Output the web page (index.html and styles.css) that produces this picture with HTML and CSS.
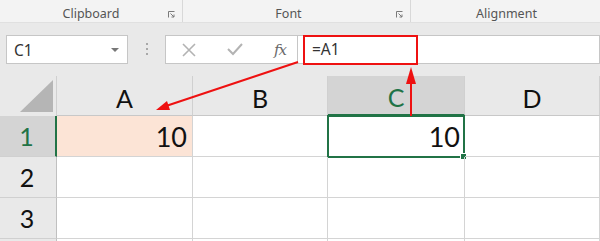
FILE: index.html
```html
<!DOCTYPE html>
<html lang="en">

<head>
    <meta charset="UTF-8">
    <title>Formula bar</title>
    <link rel="stylesheet" href="styles.css">
</head>

<body>
    <div class="sheet">
        <div class="ribbon">
            <div class="group g-clip">
                <span class="label">Clipboard</span>
                <svg class="launcher" width="7" height="7" viewBox="0 0 7 7">
                    <path d="M0.5 6.5V0.5H6.5" fill="none" stroke="#7a7a7a" />
                    <path d="M2.5 2.5L6 6M6 3.5V6H3.5" fill="none" stroke="#7a7a7a" />
                </svg>
            </div>
            <div class="group g-font">
                <span class="label">Font</span>
                <svg class="launcher" width="7" height="7" viewBox="0 0 7 7">
                    <path d="M0.5 6.5V0.5H6.5" fill="none" stroke="#7a7a7a" />
                    <path d="M2.5 2.5L6 6M6 3.5V6H3.5" fill="none" stroke="#7a7a7a" />
                </svg>
            </div>
            <div class="group g-align">
                <span class="label">Alignment</span>
            </div>
        </div>

        <div class="fbar">
            <div class="namebox">
                <span>C1</span>
                <span class="drop"></span>
            </div>
            <div class="dots"><i></i><i></i><i></i></div>
            <div class="buttons">
                <svg width="14" height="14" viewBox="0 0 14 14">
                    <path d="M1 1L13 13M13 1L1 13" stroke="#b3b3b3" stroke-width="1.6" />
                </svg>
                <svg width="16" height="13" viewBox="0 0 16 13">
                    <path d="M1 6L6 11L15 1" fill="none" stroke="#b3b3b3" stroke-width="2" />
                </svg>
                <span class="fx">fx</span>
            </div>
            <div class="input">=A1</div>
        </div>

        <div class="grid">
            <div class="corner"><span class="tri"></span></div>
            <div class="colhead">A</div>
            <div class="colhead">B</div>
            <div class="colhead active">C</div>
            <div class="colhead">D</div>

            <div class="rowhead active">1</div>
            <div class="cell ref">10</div>
            <div class="cell"></div>
            <div class="cell current">10<span class="handle"></span></div>
            <div class="cell"></div>

            <div class="rowhead">2</div>
            <div class="cell"></div>
            <div class="cell"></div>
            <div class="cell"></div>
            <div class="cell"></div>

            <div class="rowhead">3</div>
            <div class="cell"></div>
            <div class="cell"></div>
            <div class="cell"></div>
            <div class="cell"></div>

            <div class="rowhead"></div>
            <div class="cell"></div>
            <div class="cell"></div>
            <div class="cell"></div>
            <div class="cell"></div>
        </div>

        <!-- red callouts drawn over the screenshot -->
        <svg class="marks" width="600" height="241" viewBox="0 0 600 241">
            <rect x="304" y="36" width="113" height="28" fill="none" stroke="#ee1111" stroke-width="2" />
            <line x1="298" y1="62" x2="166" y2="106" stroke="#ee1111" stroke-width="2" />
            <path d="M156 110L167 101L170 110Z" fill="#ee1111" />
            <line x1="411" y1="116" x2="411" y2="80" stroke="#ee1111" stroke-width="2" />
            <path d="M411 67L406 84H416Z" fill="#ee1111" />
        </svg>
    </div>
</body>

</html>
```

FILE: styles.css
```css
body {
    margin: 0;
    background: #fff;
}

.sheet {
    position: relative;
    width: 600px;
    height: 241px;
    overflow: hidden;
    font-family: "Noto Sans", sans-serif;
}

.ribbon {
    display: flex;
    height: 23px;
    background: #f3f3f3;
    border-bottom: 1px solid #e0e0e0;
    box-sizing: border-box;
}

.group {
    position: relative;
    display: flex;
    align-items: center;
    justify-content: center;
    border-right: 1px solid #d8d8d8;
    box-sizing: border-box;
}

.g-clip {
    width: 183px;
}

.g-font {
    width: 228px;
}

.g-align {
    flex: 1;
    border-right: none;
}

.label {
    font-size: 12.5px;
    color: #555;
    margin-top: 4px;
}

.g-font .label {
    margin-left: -16px;
}

.g-align .label {
    margin-left: 2px;
}

.launcher {
    position: absolute;
    right: 7px;
    top: 11px;
}

.fbar {
    display: flex;
    align-items: flex-start;
    height: 53px;
    padding-top: 12px;
    box-sizing: border-box;
    background: #e9e9e9;
}

.namebox {
    display: flex;
    align-items: center;
    justify-content: space-between;
    width: 122px;
    height: 29px;
    margin-left: 6px;
    padding: 0 8px 0 7px;
    box-sizing: border-box;
    background: #fff;
    border: 1px solid #c6c6c6;
    font-size: 15.5px;
    color: #333;
}

.drop {
    width: 0;
    height: 0;
    border-left: 4px solid transparent;
    border-right: 4px solid transparent;
    border-top: 4px solid #777;
}

.dots {
    display: flex;
    flex-direction: column;
    gap: 3px;
    width: 37px;
    align-items: center;
    padding-top: 8px;
}

.dots i {
    width: 2px;
    height: 2px;
    background: #a8a8a8;
}

.buttons {
    display: flex;
    align-items: center;
    justify-content: space-between;
    width: 133px;
    height: 29px;
    padding: 0 11px 0 16px;
    box-sizing: border-box;
    background: #fff;
    border: 1px solid #c6c6c6;
}

.fx {
    font-family: "DejaVu Serif", serif;
    font-style: italic;
    font-size: 15px;
    color: #6a6a6a;
    letter-spacing: -1px;
}

.input {
    flex: 1;
    height: 29px;
    line-height: 27px;
    padding-left: 14px;
    box-sizing: border-box;
    background: #fff;
    border: 1px solid #c6c6c6;
    border-left: none;
    font-size: 15.5px;
    color: #333;
}

.grid {
    display: grid;
    grid-template-columns: 57px 136px 135px 137px 135px;
    grid-template-rows: 40px 41px 41px 41px 41px;
    font-family: "Lato", sans-serif;
    color: #111;
}

.corner {
    position: relative;
    background: #e9e9e9;
    border-right: 1px solid #d0d0d0;
}

.tri {
    position: absolute;
    left: 20px;
    top: 4px;
    width: 0;
    height: 0;
    border-left: 33px solid transparent;
    border-bottom: 32px solid #b5b5b5;
}

.colhead {
    display: flex;
    align-items: center;
    justify-content: center;
    padding-top: 4px;
    background: #e9e9e9;
    border-right: 1px solid #d0d0d0;
    border-bottom: 1px solid #c8c8c8;
    font-size: 25px;
}

.colhead.active {
    background: #d4d4d4;
    color: #217346;
    border-bottom: 2px solid #217346;
}

.rowhead {
    display: flex;
    align-items: center;
    justify-content: center;
    padding-right: 2px;
    background: #e9e9e9;
    border-bottom: 1px solid #d0d0d0;
    border-right: 1px solid #c0c0c0;
    font-size: 25px;
}

.rowhead.active {
    background: #d4d4d4;
    color: #217346;
    border-right: 2px solid #217346;
}

.cell {
    position: relative;
    display: flex;
    align-items: center;
    justify-content: flex-end;
    padding-right: 5px;
    border-right: 1px solid #d4d4d4;
    border-bottom: 1px solid #d4d4d4;
    font-size: 27px;
}

.cell.ref {
    background: #fce4d6;
}

.cell.current {
    margin: -1px 0 -1px -1px;
    border: 2px solid #217346;
    padding-right: 3px;
}

.handle {
    position: absolute;
    right: -4px;
    bottom: -4px;
    width: 5px;
    height: 5px;
    background: #217346;
    border: 1px solid #fff;
}

.marks {
    position: absolute;
    left: 0;
    top: 0;
    pointer-events: none;
}
```
